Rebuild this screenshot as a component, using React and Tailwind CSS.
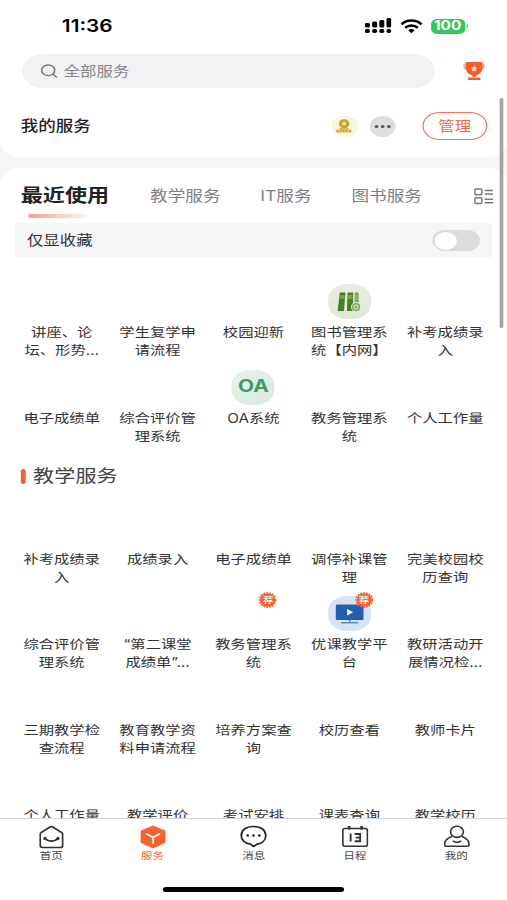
import { Search } from "lucide-react";

const recent = [
    { lines: ["讲座、论", "坛、形势…"] },
    { lines: ["学生复学申", "请流程"] },
    { lines: ["校园迎新"] },
    { lines: ["图书管理系", "统【内网】"], icon: "books" },
    { lines: ["补考成绩录", "入"] },
    { lines: ["电子成绩单"] },
    { lines: ["综合评价管", "理系统"] },
    { lines: ["OA系统"], icon: "oa" },
    { lines: ["教务管理系", "统"] },
    { lines: ["个人工作量"] },
];

const teaching = [
    { lines: ["补考成绩录", "入"] },
    { lines: ["成绩录入"] },
    { lines: ["电子成绩单"] },
    { lines: ["调停补课管", "理"] },
    { lines: ["完美校园校", "历查询"] },
    { lines: ["综合评价管", "理系统"] },
    { lines: ["“第二课堂", "成绩单”…"] },
    { lines: ["教务管理系", "统"], badge: true },
    { lines: ["优课教学平", "台"], icon: "video", badge: true },
    { lines: ["教研活动开", "展情况检…"] },
    { lines: ["三期教学检", "查流程"] },
    { lines: ["教育教学资", "料申请流程"] },
    { lines: ["培养方案查", "询"] },
    { lines: ["校历查看"] },
    { lines: ["教师卡片"] },
    { lines: ["个人工作量"] },
    { lines: ["教学评价"] },
    { lines: ["考试安排"] },
    { lines: ["课表查询"] },
    { lines: ["教学校历"] },
];

function StatusBar() {
    return (
        <div className="flex h-[54px] shrink-0 items-start pl-[50.500px] pr-[32px] pt-[14px]">
            <span className="text-[17px] font-semibold leading-6 text-black">11:36</span>

            <div className="ml-auto flex items-center pt-[4px]">
                <svg className="h-[16px] w-[22px]" viewBox="0 0 27 16" preserveAspectRatio="none">
                    <rect x="0" y="5" width="5" height="4.500" rx="1.500" />
                    <rect x="7.200" y="3.500" width="5" height="6" rx="1.500" />
                    <rect x="14.400" y="2" width="5" height="7.500" rx="1.500" />
                    <rect x="21.600" y="0" width="4.600" height="9.500" rx="1.500" />
                    <rect x="0" y="11" width="5" height="4" rx="1.800" />
                    <rect x="7.200" y="11" width="5" height="4" rx="1.800" />
                    <rect x="14.400" y="11" width="5" height="4" rx="1.800" />
                    <rect x="21.600" y="11" width="4.600" height="4" rx="1.800" />
                </svg>
                <svg
                    className="ml-[7px] h-[15px] w-[18px]"
                    viewBox="0 0 22 15"
                    preserveAspectRatio="none"
                    fill="none"
                    stroke="#000"
                    strokeWidth="2.500"
                >
                    <path d="M1 5.400C6.500 .3 15.500 .3 21 5.400" />
                    <path d="M4.700 8.800C8.400 5.600 13.600 5.600 17.300 8.800" />
                    <path d="M7.800 11.200C9.800 9.700 12.200 9.700 14.200 11.200L11 14.300Z" fill="#000" stroke="none" />
                </svg>
                <div className="ml-[7px] flex h-[15px] w-[28px] items-center justify-center rounded-[5px] bg-[#34c759] text-[12.500px] font-bold leading-none text-white">
                    100
                </div>
                <div className="ml-[1px] h-[4px] w-[1.500px] rounded-r bg-[#34c759]" />
            </div>
        </div>
    );
}

function Trophy() {
    return (
        <svg className="h-[20px] w-[18px]" viewBox="0 0 22 20" preserveAspectRatio="none">
            <path d="M3.500 3.500H1.500Q.8 7.500 4.500 8.500M18.500 3.500H20.500Q21.200 7.500 17.500 8.500" fill="none" stroke="#f2a797" strokeWidth="2" />
            <path d="M3 1H19.500V7Q19 13 13 14.500V16H9.500V14.500Q3.500 13 3 7Z" fill="#e9602e" />
            <rect x="5" y="16.500" width="12.500" height="2.500" rx=".5" fill="#e9602e" />
            <path d="M11.200 4.300L12.400 6.400 14.500 6.800 13 8.500 13.300 10.600 11.200 9.700 9.100 10.600 9.400 8.500 7.900 6.800 10 6.400Z" fill="#fbd0c0" />
        </svg>
    );
}

function AppIcon({ name }) {
    if (name === "books") {
        return (
            <div className="flex h-[35px] w-[35px] items-center justify-center rounded-[15px] bg-linear-to-b from-[#e9ede4] to-[#dde7d3]">
                <svg className="h-[20px] w-[20px]" viewBox="0 0 24 20" preserveAspectRatio="none">
                    <path d="M3 0.500H8.500L7 19H.8Z" fill="#46801f" />
                    <path d="M10.500 .5H16V19H10Z" fill="#46801f" />
                    <path d="M17.500 .5H21.500V12H17.500Z" fill="#7da35f" />
                    <path d="M3.200 4H7.800M11 4H15.500M3 6H7.600M11 6H15.500M17.500 4H21.500M17.500 7H21.500" stroke="#b5cf9f" strokeWidth=".8" />
                    <circle cx="19" cy="15" r="4.500" fill="#7da35f" stroke="#e3eadb" />
                    <circle cx="19" cy="15" r="2" fill="none" stroke="#e3eadb" />
                </svg>
            </div>
        );
    }
    if (name === "oa") {
        return (
            <div className="flex h-[35px] w-[35px] items-center justify-center rounded-[15px] bg-linear-to-br from-[#e6f2ea] to-[#d7e9dd] text-[17px] font-bold text-[#3f9a66]">
                OA
            </div>
        );
    }
    if (name === "video") {
        return (
            <div className="flex h-[35px] w-[35px] items-center justify-center rounded-[15px] bg-[#d6e3f1]">
                <svg className="h-[20px] w-[23px]" viewBox="0 0 28 20" preserveAspectRatio="none">
                    <rect x="0" y="0.500" width="28" height="15.500" rx="1.500" fill="#235fad" />
                    <path d="M11.500 5V11.500L17.500 8.200Z" fill="#fff" />
                    <path d="M14 16V18.500M5.500 18.700H22.500" stroke="#5c8cc5" strokeWidth="1.400" />
                </svg>
            </div>
        );
    }
    return null;
}

function Badge() {
    return (
        <div className="absolute -top-[4px] left-[22px] flex h-[16px] w-[15px] items-center justify-center">
            <svg className="absolute inset-0 h-full w-full" viewBox="0 0 18 16" preserveAspectRatio="none">
                <ellipse cx="9" cy="8" rx="7.600" ry="6.700" fill="#f4602f" />
                <ellipse cx="9" cy="8" rx="8.200" ry="7.200" fill="none" stroke="#f4602f" strokeWidth="1.400" strokeDasharray="1.800 1.100" />
            </svg>
            <span className="relative text-[8.500px] font-medium leading-none text-white">荐</span>
        </div>
    );
}

function ServiceGrid({ items }) {
    return (
        <div className="ml-[11.250px] grid w-[391.500px] grid-cols-5">
            {items.map((item, i) => (
                <div key={i} className="flex h-[85.500px] flex-col items-center">
                    <div className="relative h-[35px] w-[35px]">
                        <AppIcon name={item.icon} />
                        {item.badge && <Badge />}
                    </div>
                    <div className="mt-[5px] text-center text-[12.500px] leading-[18.300px] text-[#333]">
                        {item.lines.map((line) => (
                            <div key={line} className="whitespace-nowrap">{line}</div>
                        ))}
                    </div>
                </div>
            ))}
        </div>
    );
}

function NavIcon({ name }) {
    const box = "h-[24px] w-[22px]";
    if (name === "home") {
        return (
            <svg className={box} viewBox="0 0 27 24" preserveAspectRatio="none" fill="none" stroke="#333" strokeWidth="1.700">
                <path d="M2.300 9Q2.300 8 3.300 7.400L12.500 1.800Q13.500 1.200 14.500 1.800L23.700 7.400Q24.700 8 24.700 9V20.500Q24.700 22.500 22.700 22.500H4.300Q2.300 22.500 2.300 20.500Z" />
                <path d="M6.800 13.500Q13.500 19 20.200 13.500" />
                <circle cx="7" cy="13.500" r=".8" fill="#333" />
                <circle cx="20" cy="13.500" r=".8" fill="#333" />
            </svg>
        );
    }
    if (name === "service") {
        return (
            <svg className={box} viewBox="0 0 27 24" preserveAspectRatio="none">
                <path d="M12.300 .9Q13.500 .3 14.700 .9L25 5.300Q26 5.800 26 7V16.500Q26 17.700 25 18.200L14.700 23Q13.500 23.600 12.300 23L2 18.200Q1 17.700 1 16.500V7Q1 5.800 2 5.300Z" fill="#fb6130" />
                <path d="M7 9L13.500 12.300 20 9M13.500 12.300V18.500" fill="none" stroke="#fff" strokeWidth="1.700" strokeLinecap="round" />
            </svg>
        );
    }
    if (name === "message") {
        return (
            <svg className={box} viewBox="0 0 27 24" preserveAspectRatio="none" fill="none" stroke="#222" strokeWidth="1.700">
                <path d="M10.500 19.200C5 18.800 1.200 15.200 1.200 10.500C1.200 5.200 5.800 1.500 13.500 1.500C21.200 1.500 25.800 5.200 25.800 10.500C25.800 15.200 22 18.500 17 19.200L13.500 21.500Z" strokeLinejoin="round" />
                <g fill="#222" stroke="none">
                    <circle cx="7.700" cy="10.500" r="1.300" />
                    <circle cx="13.500" cy="10.500" r="1.300" />
                    <circle cx="19.300" cy="10.500" r="1.300" />
                </g>
            </svg>
        );
    }
    if (name === "calendar") {
        return (
            <svg className={box} viewBox="0 0 27 24" preserveAspectRatio="none" fill="none" stroke="#333" strokeWidth="1.600">
                <rect x="1.200" y="3.500" width="24.600" height="17.700" rx="2" />
                <path d="M7.500 1V4.500M20 1V4.500" strokeWidth="2.600" />
                <path d="M9 8.500V16.500M13 9H18.500V16.200H13M14 12.600H18.500" strokeWidth="1.900" />
            </svg>
        );
    }
    return (
        <svg className={box} viewBox="0 0 27 24" preserveAspectRatio="none" fill="none" stroke="#333" strokeWidth="1.600">
            <ellipse cx="13.700" cy="6.800" rx="6.500" ry="5.600" />
            <path d="M8.700 11.500C4 13 1.300 16 1.200 19.500Q1.200 21.200 3 21.200H24Q25.800 21.200 25.800 19.500C25.700 16 23 13 18.700 11.500" />
            <path d="M9.500 15.800Q13.700 19 18 15.800" />
        </svg>
    );
}

const tabs = [
    { name: "home", label: "首页" },
    { name: "service", label: "服务", active: true },
    { name: "message", label: "消息" },
    { name: "calendar", label: "日程" },
    { name: "me", label: "我的" },
];

export default function App() {
    return (
        <div className="h-[900px] w-[507px] overflow-hidden bg-white">
            {/* 414pt wide screen, stretched to fill the frame */}
            <div
                lang="zh-CN"
                className="relative flex h-[900px] w-[414px] origin-top-left scale-x-[1.22464] flex-col bg-white [font-family:Inter,'Noto_Sans_CJK_SC',sans-serif]"
            >
                <StatusBar />

                {/* Search */}
                <div className="flex h-[34px] shrink-0 items-center pl-[18px] pr-[18px]">
                    <div className="flex h-[34px] w-[336.500px] items-center rounded-full bg-[#f1f2f4] pl-[14px] text-[13.400px] text-[#858588]">
                        <Search className="mr-[4px] h-[16px] w-[16px] text-[#77777b]" strokeWidth={2} />
                        全部服务
                    </div>
                    <div className="ml-auto">
                        <Trophy />
                    </div>
                </div>

                <div className="min-h-0 flex-1 overflow-hidden bg-[#f6f6f6]">
                    {/* My services */}
                    <div className="flex h-[69px] items-center rounded-b-2xl bg-white pl-[17px] pr-[16.500px] pt-[7px]">
                        <span className="text-[14.300px] font-medium text-[#1f1f1f]">我的服务</span>
                        <div className="ml-auto flex h-[21px] w-[21px] items-center justify-center rounded-[9px] bg-[#faf5de]">
                            <svg className="h-[14px] w-[14px]" viewBox="0 0 17 14" preserveAspectRatio="none">
                                <ellipse cx="8.500" cy="4.800" rx="5.200" ry="4.600" fill="#c7a42b" />
                                <path d="M8.500 2.500L11 4.500 8.500 7 6 4.500Z" fill="#f0dfa0" />
                                <path d="M4 9.200Q8.500 11.500 13 9.200" fill="none" stroke="#c7a42b" />
                                <path d="M.8 12H16.200" stroke="#c7a42b" strokeWidth="2.800" strokeDasharray="2.300 .7" />
                            </svg>
                        </div>
                        <div className="ml-[10.500px] flex h-[21px] w-[21px] items-center justify-center gap-[2px] rounded-full bg-[#dedede]">
                            <i className="h-[3px] w-[3px] rounded-full bg-[#555]" />
                            <i className="h-[3px] w-[3px] rounded-full bg-[#555]" />
                            <i className="h-[3px] w-[3px] rounded-full bg-[#555]" />
                        </div>
                        <div className="ml-[22px] flex h-[28px] w-[52.500px] items-center justify-center rounded-full border border-[#ee7457] text-[13.400px] text-[#ee6a4a]">
                            管理
                        </div>
                    </div>

                    {/* Services */}
                    <div className="mt-[11px] rounded-t-2xl bg-white">
                        <div className="flex h-[55px] items-start pl-[17px] pr-[11px] text-[14.400px] leading-[27px] text-[#808084]">
                            <div className="w-[105.500px] shrink-0 pt-[14px]">
                                <div className="text-[18px] font-bold text-[#222]">最近使用</div>
                                <div className="ml-[6px] mt-[5px] h-[4px] w-[49px] rounded-full bg-linear-to-r from-[#f4a08a] to-[#fff5f2]" />
                            </div>
                            <span className="w-[90px] shrink-0 pt-[14px]">教学服务</span>
                            <span className="w-[74.500px] shrink-0 pt-[14px]">IT服务</span>
                            <span className="shrink-0 pt-[14px]">图书服务</span>
                            <svg className="ml-auto mt-[20px] h-[17px] w-[16px]" viewBox="0 0 20 17" preserveAspectRatio="none" fill="none" stroke="#77777b" strokeWidth="1.500">
                                <rect x="1" y="1" width="7" height="5.800" rx="1" />
                                <rect x="1" y="9.800" width="7" height="5.800" rx="1" />
                                <path d="M11 2.500H19.500M11 6H19.500M11 11.200H19.500M11 14.700H19.500" />
                            </svg>
                        </div>

                        <div className="ml-[11.500px] flex h-[35px] w-[390.500px] items-center rounded-[4px] bg-[#f6f6f6] pl-[10.500px] pr-[10px]">
                            <span className="text-[13.400px] text-[#333]">仅显收藏</span>
                            <div className="ml-auto flex h-[21px] w-[39px] items-center rounded-full bg-[#dcdcdc] pl-[1.500px]">
                                <div className="h-[18px] w-[18px] rounded-full bg-white" />
                            </div>
                        </div>

                        <div className="pt-[26px]">
                            <ServiceGrid items={recent} />
                        </div>

                        <div className="mb-[13.500px] flex h-[42px] items-center pl-[17px]">
                            <div className="h-[15px] w-[4px] rounded-full bg-[#ee6239]" />
                            <span className="ml-[6px] text-[17.300px] text-[#444]">教学服务</span>
                        </div>
                        <ServiceGrid items={teaching} />
                    </div>
                </div>

                {/* Bottom navigation */}
                <div className="h-[82px] shrink-0 border-t border-[#d5d5d5] bg-white">
                    <div className="ml-[0.500px] grid grid-cols-5 pt-[6px]">
                        {tabs.map((tab) => (
                            <div key={tab.name} className="flex flex-col items-center">
                                <NavIcon name={tab.name} />
                                <span className={tab.active ? "text-[9.400px] leading-[14px] text-[#fb6130]" : "text-[9.400px] leading-[14px] text-[#444]"}>
                                    {tab.label}
                                </span>
                            </div>
                        ))}
                    </div>
                    <div className="mx-auto mt-[24px] h-[5px] w-[148px] rounded-full bg-black" />
                </div>

                {/* Scrollbar thumb */}
                <div className="absolute left-[408px] top-[98px] h-[230px] w-[3px] rounded-full bg-[#a3a3a3]" />
            </div>
        </div>
    );
}
